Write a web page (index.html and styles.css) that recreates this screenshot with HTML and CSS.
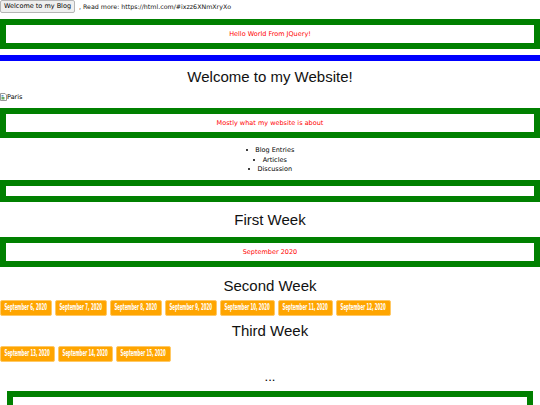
FILE: index.html
```html
<!DOCTYPE html>
<html>
<head>
<meta charset="utf-8">
<link rel="stylesheet" href="styles.css">
</head>
<body>
<div class="top"><button class="blog-btn">Welcome to my Blog</button><span class="read">, Read more: https://html.com/#ixzz6XNmXryXo</span></div>
<div class="box box-first">Hello World From JQuery!</div>
<div class="blue"></div>
<h1 class="title">Welcome to my Website!</h1>
<div class="paris"><svg class="broken" width="7" height="8" viewBox="0 0 7 8"><path d="M0.5 0.5H5L6.5 2V7.5H0.5Z" fill="#fff" stroke="#999" stroke-width="1"/><rect x="1.5" y="4" width="3" height="2.5" fill="#6a6"/><rect x="1.5" y="2" width="2" height="1.5" fill="#59c"/></svg><span>Paris</span></div>
<div class="box box-mid">Mostly what my website is about</div>
<ul class="menu">
<li>Blog Entries</li>
<li>Articles</li>
<li>Discussion</li>
</ul>
<div class="box box-empty"></div>
<h2 class="week week-first">First Week</h2>
<div class="box">September 2020</div>
<h2 class="week week-second">Second Week</h2>
<div class="days">
<button class="day d1"><span>September 6, 2020</span></button>
<button class="day d1"><span>September 7, 2020</span></button>
<button class="day d1"><span>September 8, 2020</span></button>
<button class="day d1"><span>September 9, 2020</span></button>
<button class="day d2"><span>September 10, 2020</span></button>
<button class="day d2"><span>September 11, 2020</span></button>
<button class="day d2"><span>September 12, 2020</span></button>
</div>
<h2 class="week week-third">Third Week</h2>
<div class="days">
<button class="day d2"><span>September 13, 2020</span></button>
<button class="day d2"><span>September 14, 2020</span></button>
<button class="day d2"><span>September 15, 2020</span></button>
</div>
<div class="dots">...</div>
<div class="box box-bottom"></div>
</body>
</html>
```
FILE: styles.css
```css
html, body {
  margin: 0;
  padding: 0;
  background: #fff;
}
body {
  font-family: "DejaVu Sans", Verdana, sans-serif;
  color: #000;
  overflow: hidden;
}
.top {
  height: 19px;
  display: flex;
  align-items: flex-start;
  font-size: 6.3px;
}
.blog-btn {
  font-family: "DejaVu Sans", sans-serif;
  font-size: 6.5px;
  height: 13px;
  line-height: 11px;
  padding: 0 3px;
  margin: 0;
  background: #efefef;
  border: 1px solid #b5b5b5;
  border-radius: 2px;
  color: #000;
}
.read {
  margin-left: 4px;
  line-height: 13px;
  color: #111;
}
.box {
  border: 6px solid #008000;
  padding: 5px;
  text-align: center;
  color: #f00;
  font-size: 6.5px;
  line-height: 8px;
}
.box-empty {
  height: 0;
}
.blue {
  margin-top: 6px;
  height: 6px;
  background: #0000ff;
}
.title, .week {
  font-family: "Liberation Sans", Arial, sans-serif;
  font-weight: normal;
  font-size: 15px;
  line-height: 18px;
  text-align: center;
  margin: 0;
  color: #111;
}
.title {
  margin-top: 7px;
}
.paris {
  margin-top: 6px;
  height: 10px;
  display: flex;
  align-items: center;
  font-size: 6.5px;
  margin-bottom: 6px;
}
.broken {
  display: block;
}
.menu {
  list-style: disc inside;
  margin: 8px 0 5px;
  padding: 0;
  text-align: center;
  font-size: 6.5px;
  line-height: 9.5px;
}
.week-first {
  margin: 9px 0 8px;
}
.week-second {
  margin: 10px 0 5px;
}
.week-third {
  margin: 6px 0 6px;
}
.days {
  display: flex;
  gap: 3px;
}
.day {
  display: flex;
  justify-content: center;
  align-items: center;
  height: 16px;
  margin: 0;
  padding: 0;
  background: #ffa500;
  border: 1px solid #ffc966;
  border-radius: 2px;
  color: #fff;
  overflow: visible;
}
.d1 { width: 52px; }
.d2 { width: 55px; }
.day span {
  flex-shrink: 0;
  display: inline-block;
  white-space: nowrap;
  font-family: "DejaVu Sans Condensed", "DejaVu Sans", sans-serif;
  font-stretch: condensed;
  font-size: 8px;
  font-weight: 600;
  transform: scaleX(0.55);
}
.dots {
  margin-top: 10px;
  height: 10px;
  line-height: 10px;
  text-align: center;
  font-family: "Liberation Sans", Arial, sans-serif;
  font-size: 13px;
}
.box-bottom {
  margin: 9px 7px 0;
  height: 40px;
}
```
